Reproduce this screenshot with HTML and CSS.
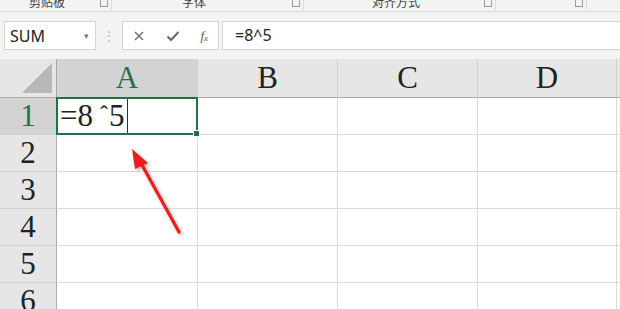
FILE: index.html
```html
<!DOCTYPE html>
<html lang="zh">
<head>
	<meta charset="UTF-8">
	<meta name="viewport" content="width=device-width, initial-scale=1.0">
	<title>Excel</title>
	<link rel="stylesheet" href="styles.css">
</head>
<body>
	<div class="ribbon">
		<div class="group g1"><span class="label">剪贴板</span><span class="launch"></span></div>
		<div class="group g2"><span class="label">字体</span><span class="launch"></span></div>
		<div class="group g3"><span class="label">对齐方式</span><span class="launch"></span></div>
		<div class="group g4"><span class="launch"></span></div>
		<div class="group g5"></div>
	</div>
	<div class="formulaBar">
		<div class="nameBox">SUM<span class="drop">&#9662;</span></div>
		<div class="grip">&#8942;</div>
		<div class="btns">
			<svg width="12" height="12" viewBox="0 0 12 12"><path d="M2 2 L10 10 M10 2 L2 10" stroke="#666" stroke-width="1.3"/></svg>
			<svg width="14" height="12" viewBox="0 0 14 12"><path d="M1.5 6.5 L5 10 L12.5 2" stroke="#666" stroke-width="2" fill="none"/></svg>
			<span class="fx">f<sub>x</sub></span>
		</div>
		<div class="formula">=8^5</div>
	</div>
	<div class="sheet">
		<div class="grid">
			<div class="corner"><span class="tri"></span></div>
			<div class="colHead sel">A</div>
			<div class="colHead">B</div>
			<div class="colHead">C</div>
			<div class="colHead">D</div>
			<div class="colHead edge"></div>

			<div class="rowHead sel">1</div>
			<div class="cell active"><span class="val">=8</span><span class="caret">ˆ</span><span class="val">5</span><span class="cursor"></span></div>
			<div class="cell"></div><div class="cell"></div><div class="cell"></div><div class="cell edge"></div>

			<div class="rowHead">2</div>
			<div class="cell"></div><div class="cell"></div><div class="cell"></div><div class="cell"></div><div class="cell edge"></div>
			<div class="rowHead">3</div>
			<div class="cell"></div><div class="cell"></div><div class="cell"></div><div class="cell"></div><div class="cell edge"></div>
			<div class="rowHead">4</div>
			<div class="cell"></div><div class="cell"></div><div class="cell"></div><div class="cell"></div><div class="cell edge"></div>
			<div class="rowHead">5</div>
			<div class="cell"></div><div class="cell"></div><div class="cell"></div><div class="cell"></div><div class="cell edge"></div>
			<div class="rowHead">6</div>
			<div class="cell"></div><div class="cell"></div><div class="cell"></div><div class="cell"></div><div class="cell edge"></div>
		</div>
		<svg class="arrow" width="80" height="100" viewBox="0 0 80 100">
			<defs>
				<filter id="sh" x="-50%" y="-50%" width="200%" height="200%">
					<feDropShadow dx="1.5" dy="1.5" stdDeviation="1.5" flood-color="#000" flood-opacity="0.35"/>
				</filter>
			</defs>
			<g filter="url(#sh)">
				<path d="M55 92 L18 25" stroke="#ee1c1c" stroke-width="3.2" stroke-linecap="round"/>
				<path d="M8 9 L24 23 L11 29 Z" fill="#ee1c1c"/>
			</g>
		</svg>
	</div>
</body>
</html>
```
FILE: styles.css
```css
body {
	margin: 0;
	width: 620px;
	height: 309px;
	overflow: hidden;
	background-color: #f3f3f3;
	font-family: "Noto Sans", "Open Sans", sans-serif;
}
.ribbon {
	display: flex;
	height: 11px;
	overflow: hidden;
	border-bottom: 1px solid #dadada;
	background-color: #f3f3f3;
}
.group {
	position: relative;
	border-right: 1px solid #dadada;
	height: 10px;
	box-sizing: border-box;
}
.g1 { width: 112px; padding-left: 29px; }
.g2 { width: 192px; padding-left: 70px; }
.g3 { width: 192px; padding-left: 68px; }
.g4 { width: 91px; }
.g5 { flex: 1; border-right: none; }
.label {
	display: block;
	font-family: "Noto Sans CJK SC", sans-serif;
	font-size: 12px;
	line-height: 12px;
	margin-top: -4px;
	color: #444;
}
.launch {
	position: absolute;
	right: 3px;
	top: 0;
	width: 6px;
	height: 6px;
	border: 1px solid #999;
	border-top: none;
}
.formulaBar {
	display: flex;
	align-items: stretch;
	height: 29px;
	padding: 9px 0 9px 4px;
}
.nameBox {
	width: 92px;
	background-color: #fff;
	border: 1px solid #d4d4d4;
	display: flex;
	align-items: center;
	justify-content: space-between;
	padding: 0 6px 0 5px;
	box-sizing: border-box;
	font-size: 16px;
	color: #222;
}
.drop {
	font-size: 9px;
	color: #777;
}
.grip {
	width: 26px;
	text-align: center;
	color: #bbb;
	font-size: 12px;
	line-height: 29px;
}
.btns {
	width: 97px;
	box-sizing: border-box;
	background-color: #fff;
	border: 1px solid #d4d4d4;
	display: flex;
	align-items: center;
	justify-content: space-between;
	padding: 0 10px 0 10px;
}
.fx {
	font-family: "Liberation Serif", serif;
	font-style: italic;
	font-size: 13px;
	color: #555;
}
.fx sub {
	font-size: 9px;
	vertical-align: -1px;
}
.formula {
	flex: 1;
	margin-left: 3px;
	background-color: #fff;
	border: 1px solid #d4d4d4;
	border-right: none;
	font-size: 16px;
	line-height: 27px;
	padding-left: 12px;
	color: #222;
}
.sheet {
	position: relative;
	height: 250px;
	background-color: #fff;
	overflow: hidden;
}
.grid {
	display: grid;
	grid-template-columns: 57px 141px 140px 140px 139px 3px;
	grid-template-rows: 39px repeat(6, 37px);
	font-family: "Liberation Serif", "Times New Roman", serif;
	font-size: 31px;
	color: #222;
}
.corner {
	position: relative;
	background-color: #e6e6e6;
	border-right: 1px solid #ababab;
	border-bottom: 1px solid #ababab;
}
.tri {
	position: absolute;
	right: 4px;
	bottom: 4px;
	width: 0;
	height: 0;
	border-left: 30px solid transparent;
	border-bottom: 30px solid #b8b8b8;
}
.colHead {
	background-color: #e6e6e6;
	border-right: 1px solid #d0d0d0;
	border-bottom: 1px solid #ababab;
	display: flex;
	align-items: center;
	justify-content: center;
}
.rowHead {
	background-color: #e6e6e6;
	border-right: 1px solid #ababab;
	border-bottom: 1px solid #d0d0d0;
	display: flex;
	align-items: center;
	justify-content: center;
}
.sel {
	background-color: #d3d3d3;
	color: #217346;
}
.cell {
	border-right: 1px solid #dadada;
	border-bottom: 1px solid #dadada;
}
.edge {
	border-right: none;
}
.active {
	position: relative;
	margin: -1px 0 0 -1px;
	border: 2px solid #217346;
	display: flex;
	align-items: center;
	padding-left: 2px;
}
.active::after {
	content: "";
	position: absolute;
	right: -4px;
	bottom: -4px;
	width: 5px;
	height: 5px;
	background-color: #217346;
	border: 1px solid #fff;
}
.caret {
	font-size: 24px;
	margin: 0 1px 0 7px;
	align-self: flex-start;
	line-height: 30px;
}
.cursor {
	width: 1px;
	height: 34px;
	margin-left: 3px;
	background-color: #333;
}
.arrow {
	position: absolute;
	left: 124px;
	top: 81px;
}
```
